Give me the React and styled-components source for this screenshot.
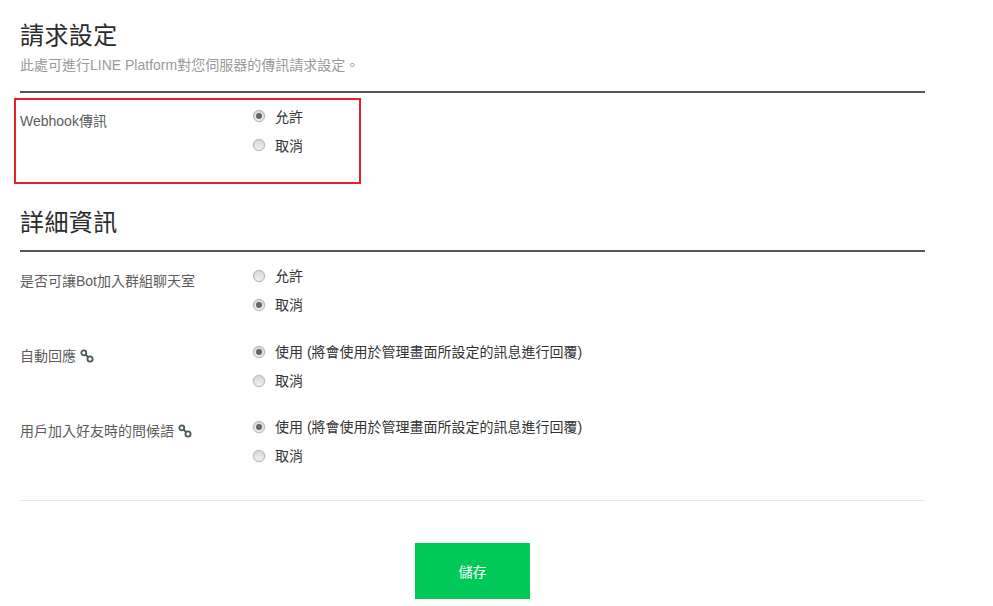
import React from "react";
import styled, { createGlobalStyle } from "styled-components";

const Global = createGlobalStyle`
  html, body { margin: 0; padding: 0; background: #fff; }
  body { font-family: "Liberation Sans", "Noto Sans CJK TC", sans-serif; color: #555; overflow: hidden; }
`;
const Page = styled.div`
  width: 905px;
  padding: 21px 0 0 20px;
  display: flex;
  flex-direction: column;
`;
const Heading = styled.h2`
  margin: 0;
  font-size: 24px;
  line-height: 30px;
  height: 30px;
  font-weight: 400;
  letter-spacing: 0.4px;
  color: #2b2b2b;
`;
const Sub = styled.p`
  margin: 2px 0 0;
  font-size: 14px;
  line-height: 25px;
  height: 25px;
  color: #9a9a9a;
`;
const Rule = styled.div`
  height: 2px;
  background: #555;
  margin-top: ${p => p.$top}px;
`;
const Row = styled.div`
  position: relative;
  box-sizing: border-box;
  display: grid;
  grid-template-columns: 233px 1fr;
  height: ${p => p.$h}px;
  padding-top: 13px;
`;
const Label = styled.div`
  font-size: 14px;
  line-height: 20px;
  padding-top: ${p => p.$pt || 0}px;
  color: #5c5c5c;
  display: flex;
  align-items: center;
  align-self: start;
  gap: 4px;
`;
const Options = styled.div`
  display: flex;
  flex-direction: column;
  gap: 9px;
`;
const Option = styled.div`
  display: flex;
  align-items: center;
  height: 20px;
  font-size: 14px;
  color: #333;
  gap: 10px;
`;
const Radio = styled.span`
  width: 12px;
  height: 12px;
  box-sizing: border-box;
  margin-top: ${p => (p.$low ? 1 : -1)}px;
  border-radius: 50%;
  border: 1px solid #b4b4b4;
  background: linear-gradient(#d8d8d8, #f0f0f0);
  box-shadow: 0 0 1px #aaa;
  display: flex;
  align-items: center;
  justify-content: center;
  &::after {
    content: "";
    width: 6px;
    height: 6px;
    border-radius: 50%;
    background: ${p => (p.$on ? "#666" : "transparent")};
  }
`;
const RadioWrap = styled.span`
  display: inline-flex;
  width: 12px;
`;
const Highlight = styled.div`
  position: absolute;
  left: -6px;
  top: 5px;
  width: 343px;
  height: 82px;
  border: 2px solid #e8202e;
`;
const Divider = styled.div`
  height: 1px;
  background: #e8e8e8;
`;
const Actions = styled.div`
  display: flex;
  justify-content: center;
  padding-top: 42px;
`;
const Save = styled.button`
  width: 115px;
  height: 56px;
  border: 0;
  padding: 0;
  background: #00c95a;
  color: #fff;
  font: 14px "Liberation Sans", "Noto Sans CJK TC", sans-serif;
`;
const H2Wrap = styled.div`
  padding-top: ${p => p.$top}px;
`;

const LinkIcon = () => (
  <svg width="14" height="14" viewBox="0 0 14 14" fill="none" stroke="#4a5a5a" strokeWidth="1.8">
    <circle cx="3.8" cy="3.8" r="2.5" />
    <circle cx="10" cy="10" r="2.6" />
    <path d="M5.4 5.4 8.4 8.4" strokeWidth="2" />
  </svg>
);

const Choice = ({ on, low, children }) => (
  <Option>
    <RadioWrap><Radio $on={on} $low={low} /></RadioWrap>
    <span>{children}</span>
  </Option>
);

const USE = "使用 (將會使用於管理畫面所設定的訊息進行回覆)";

export default function App() {
  return (
    <Page>
      <Global />
      <Heading>請求設定</Heading>
      <Sub>此處可進行LINE Platform對您伺服器的傳訊請求設定。</Sub>
      <Rule $top={13} />
      <Row $h={92}>
        <Highlight />
        <Label $pt={5}>Webhook傳訊</Label>
        <Options>
          <Choice on>允許</Choice>
          <Choice>取消</Choice>
        </Options>
      </Row>
      <H2Wrap $top={23}>
        <Heading>詳細資訊</Heading>
      </H2Wrap>
      <Rule $top={12} />
      <Row $h={76}>
        <Label $pt={6}>是否可讓Bot加入群組聊天室</Label>
        <Options>
          <Choice low>允許</Choice>
          <Choice low on>取消</Choice>
        </Options>
      </Row>
      <Row $h={75}>
        <Label $pt={5}>自動回應 <LinkIcon /></Label>
        <Options>
          <Choice low on>{USE}</Choice>
          <Choice low>取消</Choice>
        </Options>
      </Row>
      <Row $h={97}>
        <Label $pt={5}>用戶加入好友時的問候語 <LinkIcon /></Label>
        <Options>
          <Choice low on>{USE}</Choice>
          <Choice low>取消</Choice>
        </Options>
      </Row>
      <Divider />
      <Actions>
        <Save>儲存</Save>
      </Actions>
    </Page>
  );
}
